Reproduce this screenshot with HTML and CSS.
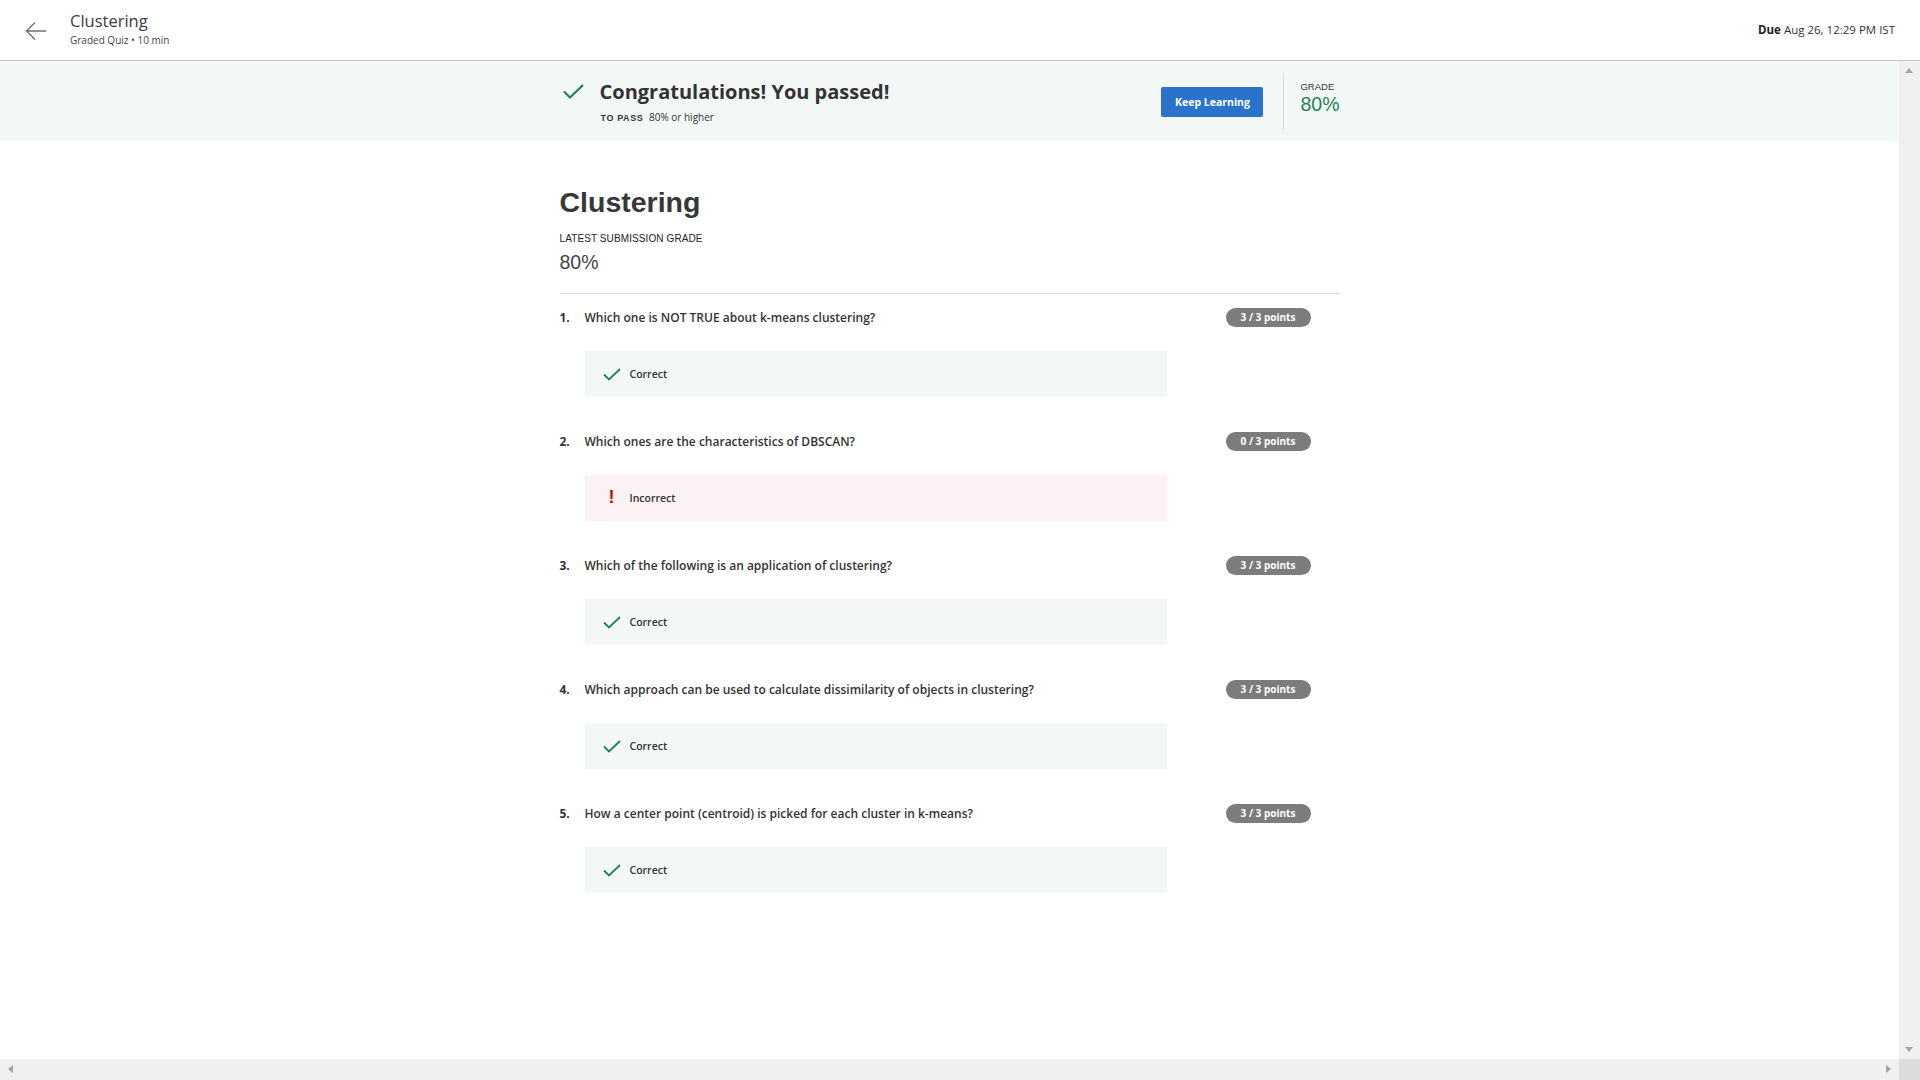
FILE: index.html
```html
<!DOCTYPE html>
<html lang="en">
<head>
<meta charset="utf-8">
<title>Clustering</title>
<link rel="stylesheet" href="styles.css">
</head>
<body>
<div class="app">
  <header class="topbar">
    <div class="topbar-left">
      <svg class="back" width="22" height="20" viewBox="0 0 22 20"><path d="M21 10H2M10 1.5L1.5 10L10 18.5" fill="none" stroke="#6f6f6f" stroke-width="1.4"/></svg>
      <div class="titles">
        <div class="item-title">Clustering</div>
        <div class="item-sub">Graded Quiz • 10 min</div>
      </div>
    </div>
    <div class="due"><b>Due</b> Aug 26, 12:29 PM IST</div>
  </header>
  <div class="viewport">
    <div class="content">
      <section class="banner">
        <div class="banner-inner">
          <div class="pass">
            <div class="pass-head">
              <svg class="pass-check" width="21" height="15" viewBox="0 0 21 15"><polyline points="1,7.5 7,13.5 20,1" fill="none" stroke="#1f8354" stroke-width="2.2"/></svg>
              <h2>Congratulations! You passed!</h2>
            </div>
            <div class="to-pass"><span class="tp-label">TO PASS</span> 80% or higher</div>
          </div>
          <div class="banner-actions">
            <button class="keep">Keep Learning</button>
            <div class="sep"></div>
            <div class="grade">
              <div class="grade-label">GRADE</div>
              <div class="grade-val">80%</div>
            </div>
          </div>
        </div>
      </section>
      <main class="main">
        <h1 class="quiz-title">Clustering</h1>
        <div class="latest-label">LATEST SUBMISSION GRADE</div>
        <div class="latest-val">80%</div>
        <div class="divider"></div>
        <ol class="questions">
          <li class="q">
            <div class="q-head"><span class="q-num">1.</span><span class="q-text">Which one is NOT TRUE about k-means clustering?</span><span class="pts">3 / 3 points</span></div>
            <div class="fb ok"><svg class="fb-check" width="18" height="13" viewBox="0 0 18 13"><polyline points="1,6.5 6,11.5 17,1" fill="none" stroke="#1f8354" stroke-width="1.9"/></svg><span>Correct</span></div>
          </li>
          <li class="q">
            <div class="q-head"><span class="q-num">2.</span><span class="q-text">Which ones are the characteristics of DBSCAN?</span><span class="pts">0 / 3 points</span></div>
            <div class="fb bad"><span class="bang">!</span><span>Incorrect</span></div>
          </li>
          <li class="q">
            <div class="q-head"><span class="q-num">3.</span><span class="q-text">Which of the following is an application of clustering?</span><span class="pts">3 / 3 points</span></div>
            <div class="fb ok"><svg class="fb-check" width="18" height="13" viewBox="0 0 18 13"><polyline points="1,6.5 6,11.5 17,1" fill="none" stroke="#1f8354" stroke-width="1.9"/></svg><span>Correct</span></div>
          </li>
          <li class="q">
            <div class="q-head"><span class="q-num">4.</span><span class="q-text">Which approach can be used to calculate dissimilarity of objects in clustering?</span><span class="pts">3 / 3 points</span></div>
            <div class="fb ok"><svg class="fb-check" width="18" height="13" viewBox="0 0 18 13"><polyline points="1,6.5 6,11.5 17,1" fill="none" stroke="#1f8354" stroke-width="1.9"/></svg><span>Correct</span></div>
          </li>
          <li class="q">
            <div class="q-head"><span class="q-num">5.</span><span class="q-text">How a center point (centroid) is picked for each cluster in k-means?</span><span class="pts">3 / 3 points</span></div>
            <div class="fb ok"><svg class="fb-check" width="18" height="13" viewBox="0 0 18 13"><polyline points="1,6.5 6,11.5 17,1" fill="none" stroke="#1f8354" stroke-width="1.9"/></svg><span>Correct</span></div>
          </li>
        </ol>
      </main>
    </div>
    <div class="vscroll">
      <span class="arr up"></span>
      <span class="arr down"></span>
    </div>
    <div class="hscroll">
      <span class="arr left"></span>
      <span class="arr right"></span>
    </div>
    <div class="corner"></div>
  </div>
</div>
</body>
</html>
```
FILE: styles.css
```css
* { box-sizing: border-box; }
html, body { margin: 0; padding: 0; height: 100%; }
body {
  font-family: "Open Sans", "Liberation Sans", sans-serif;
  color: #1f1f1f;
  background: #fff;
  overflow: hidden;
}
.app {
  height: 100vh;
  display: grid;
  grid-template-rows: 61px 1fr;
}
.topbar {
  display: flex;
  align-items: center;
  justify-content: space-between;
  border-bottom: 1px solid #c6c6c6;
  padding: 0 25px 0 25px;
}
.topbar-left { display: flex; align-items: center; gap: 23px; }
.back { display: block; margin-top: 1px; }
.item-title { font-size: 16.5px; color: #3c3c3c; line-height: 22px; margin-top: -4px; }
.item-sub { font-size: 10px; color: #444; line-height: 13px; margin-top: 2px; }
.due { font-size: 11.5px; color: #333; margin-top: -2px; }
.due b { font-weight: 700; color: #222; }

.viewport {
  display: grid;
  grid-template-columns: 1fr 21px;
  grid-template-rows: 1fr 21px;
  min-height: 0;
}
.content { overflow: hidden; min-height: 0; }
.vscroll, .hscroll { background: #f0f0f0; position: relative; }
.corner { background: #dcdcdc; }
.arr { position: absolute; width: 0; height: 0; border: solid transparent; }
.arr.up { top: 7px; left: 6px; border-width: 0 4.5px 5px 4.5px; border-bottom-color: #a3a3a3; }
.arr.down { bottom: 7px; left: 6px; border-width: 5px 4.5px 0 4.5px; border-top-color: #a3a3a3; }
.arr.left { left: 8px; top: 6px; border-width: 4.5px 5px 4.5px 0; border-right-color: #a3a3a3; }
.arr.right { right: 8px; top: 6px; border-width: 4.5px 0 4.5px 5px; border-left-color: #a3a3a3; }

.banner { background: #f3f8f6; height: 80px; }
.banner-inner {
  width: 780px;
  margin: 0 auto;
  height: 100%;
  display: flex;
  align-items: center;
  justify-content: space-between;
}
.pass { padding-left: 3px; margin-top: 3px; }
.pass-head { display: flex; align-items: center; gap: 16px; margin-top: -3px; }
.pass-check { display: block; }
.pass-head h2 { margin: 0; font-size: 20px; font-weight: 700; color: #333; line-height: 26px; }
.to-pass { font-size: 10px; color: #333; margin-left: 38px; margin-top: 5px; }
.tp-label { font-family: "Liberation Sans", sans-serif; font-weight: 700; letter-spacing: 0.6px; margin-right: 3px; font-size: 9px; }
.banner-actions { display: flex; align-items: center; height: 100%; }
.keep {
  width: 102px; height: 30px;
  background: #2a73cc; color: #fff;
  border: 0; border-radius: 2px;
  font-family: "Open Sans", sans-serif; font-weight: 700; font-size: 10.5px;
  margin-top: 1px;
}
.sep { width: 1px; height: 57px; background: #dadada; margin: 0 16px 0 20px; }
.grade { margin-top: -6px; }
.grade-label { font-family: "Liberation Sans", sans-serif; font-size: 9.5px; color: #333; line-height: 12px; }
.grade-val { font-family: "Liberation Sans", sans-serif; font-size: 19.5px; color: #1f8354; line-height: 22px; }

.main { width: 780px; margin: 0 auto; padding-top: 44px; }
.quiz-title { margin: 0; font-family: "Liberation Sans", sans-serif; font-weight: 700; font-size: 28.5px; line-height: 34px; color: #373737; }
.latest-label { font-family: "Liberation Sans", sans-serif; font-size: 10px; line-height: 14px; color: #222; margin-top: 13px; letter-spacing: 0.1px; }
.latest-val { font-family: "Liberation Sans", sans-serif; font-size: 19.5px; line-height: 24px; color: #444; margin-top: 4px; }
.divider { height: 1px; background: #dcdcdc; margin-top: 19px; }
.questions { list-style: none; margin: 0; padding: 13px 0 0 0; }
.q { margin-bottom: 34px; }
.q-head { display: flex; align-items: center; height: 20px; }
.q-num { width: 25px; font-size: 12px; font-weight: 700; color: #333; }
.q-text { flex: 1; font-size: 12px; font-weight: 600; color: #333; }
.pts {
  width: 85px; height: 19px;
  border-radius: 10px;
  background: #7c7c7c; color: #fff;
  font-size: 10px; font-weight: 700;
  display: flex; align-items: center; justify-content: center;
  margin-right: 29px;
}
.fb {
  margin: 24px 0 0 25px;
  width: 582px; height: 46px;
  display: flex; align-items: center;
  padding-left: 18px;
  font-size: 10.5px; font-weight: 600; color: #333;
}
.fb.ok { background: #f3f8f6; }
.fb.bad { background: #fdf2f3; }
.fb-check { display: block; margin-right: 9px; }
.bang { color: #d30001; font-family: "Liberation Sans", sans-serif; font-weight: 700; font-size: 18px; width: 18px; text-align: center; margin-right: 9px; margin-top: -2px; }
```
